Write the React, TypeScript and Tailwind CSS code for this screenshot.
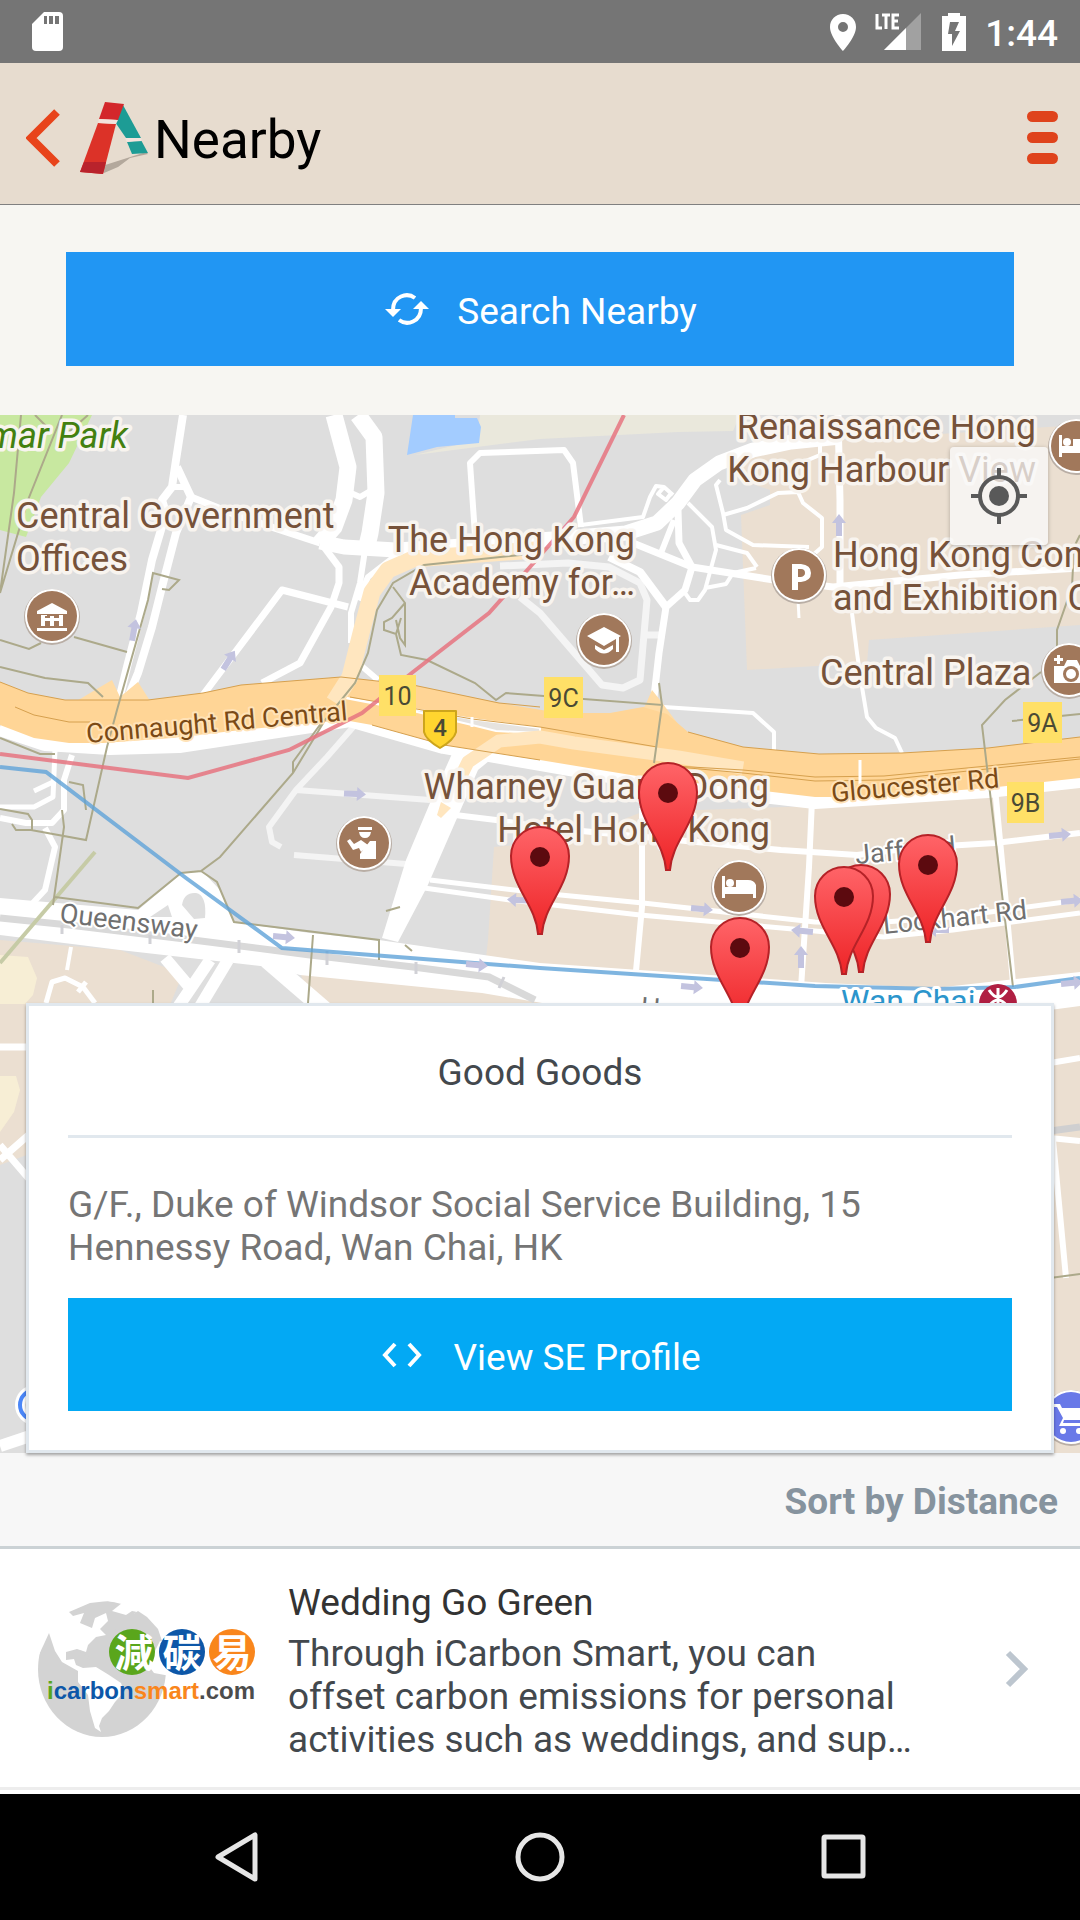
import type { ReactNode } from 'react';

const whiteRoads: [string, number][] = [
  ['M334 415L348 467L344 500L334 527L320 543', 17],
  ['M358 415L374 437L376 493L370 533L366 550', 17],
  ['M320 542L344 547L396 550L448 547L540 540L626 533L657 523L678 503L695 480L719 463L753 450L791 442L840 437', 15],
  ['M183 415L176 460L172 487L162 500L166 513L152 560L141 613L127 667L119 700', 8],
  ['M177 467L191 497L176 533L162 587L152 627L138 673L126 702', 8],
  ['M172 487H186M344 490L360 497L372 490', 6],
  ['M191 497L241 517L320 543', 7],
  ['M324 547L339 567L339 583L331 607L300 663L262 683', 7],
  ['M203 695L282 590L348 607', 7],
  ['M365 550L360 583L351 613V643', 6],
  ['M399 553L368 577L358 600', 6],
  ['M358 663L378 680', 6],
  ['M475 535L470 463L480 453L564 450L573 463L581 527', 6],
  ['M581 525L643 517L650 497L656 486L664 487L673 495M664 487L658 494L666 500L672 492', 4],
  ['M633 543L692 567L774 580L833 587L960 575L1080 568', 7],
  ['M688 503L712 527L716 550L705 590L698 600L690 600L685 593', 4],
  ['M678 510L679 543L692 567L685 590L666 607L659 653L654 697', 7],
  ['M674 520L661 553', 6],
  ['M609 557L640 572L666 607', 8],
  ['M705 588L726 584L733 573L756 568M716 545L747 553L757 567', 4],
  ['M720 480L716 485L723 513L726 530L753 545L809 547', 4],
  ['M723 515L747 508L778 493L798 492L803 503L822 518V547L814 554', 4],
  ['M838 415L840 500V587', 7],
  ['M820 440V455L796 465', 4],
  ['M852 613L857 653L862 687L867 717L876 728L895 738L902 753', 4],
  ['M798 600L799 618', 3],
  ['M664 707L753 713L774 732V750', 4],
  ['M455 815L496 820L540 827L781 850L857 855L912 848L995 843L1080 833', 6],
  ['M430 880L540 893L643 903L815 922L871 923L953 917L1080 900', 5],
  ['M417 887L510 900L640 915L826 932L884 937L953 930L1080 913', 5],
  ['M642 808V907L633 1003', 6],
  ['M812 800L809 867L800 1003', 6],
  ['M995 788L1005 893L1013 983', 6],
  ['M55 750L53 797L34 807H0', 5],
  ['M53 782L34 791', 5],
  ['M72 755L64 780V810L52 823L26 823L0 818', 6],
  ['M45 828L55 847L45 890L31 905', 6],
  ['M46 1003L52 982L65 978L83 987L95 1003M86 982L78 992', 5],
  ['M71 947L67 970', 4],
  ['M0 1047H30M0 1160L40 1125M0 1145L30 1180', 7],
  ['M1050 1063L1080 1058M1050 1138L1080 1141', 6],
  ['M1053 1140L1066 1278', 6],
  ['M0 1446L60 1426', 12],
];

const footways = [
  'M21 415L14 493L0 593M62 415L28 500L0 593M35 415L46 426M88 415L60 440',
  'M0 640L29 649L41 643M74 637L127 652M0 667L45 678L88 683L103 697',
  'M162 589L169 590L179 580L153 573L148 600L117 710L107 747L86 840L31 830L16 830L12 824',
  'M69 782L83 785L86 810M0 809L28 814L32 820V830M0 738L40 754H55',
  'M62 810L64 827L53 905M55 897L138 908L181 873L201 871L220 857L293 773L325 720L355 683L368 653L377 610L393 583L424 565L540 553',
  'M201 871L217 882L234 922L379 940V960M313 935L308 1003M386 911L400 907M405 945L412 951',
  'M293 773V762L322 722M393 587L405 603V645L400 638L396 620M405 603L392 618L384 622V630L396 634L401 618M396 634L401 655L427 660L475 683L496 700L506 693L544 696L662 705L659 683M662 705L654 763',
  'M1080 535L1074 547L1072 587L1057 630V650M1041 672L1005 700L982 725L1013 987M1012 721L1080 714',
  'M1050 1278L1080 1274M153 1003V990',
];

const arrows = [
  [1060, 835, -5], [702, 909, 5], [692, 987, 5], [802, 931, 185], [801, 957, -90], [938, 930, 180],
  [1072, 901, -5], [1072, 983, -5], [355, 794, 3], [284, 937, 5], [477, 965, 5], [518, 900, 183],
  [134, 630, -80], [229, 660, -58], [839, 525, -90],
];

const pins = [[540, 934], [668, 870], [740, 1025], [861, 972], [844, 974], [928, 942]];

const labelClass = 'fill-[#76523a] stroke-[#f8f4ef] stroke-[7px] text-[36px] [paint-order:stroke]';
const roadClass = 'fill-[#7b4a16] stroke-[#ffe3b8] stroke-[4px] text-[27px] [paint-order:stroke]';
const streetClass = 'fill-[#707070] stroke-white stroke-[4px] text-[27px] [paint-order:stroke]';

function Poi({ x, y, color = '#a1785b', children }: { x: number; y: number; color?: string; children?: ReactNode }) {
  return (
    <g transform={`translate(${x} ${y})`}>
      <circle cy="1" r="28" fill="#b9aea5" />
      <circle r="27" fill="#fff" />
      <circle r="25" fill={color} />
      <g fill="#fff">{children}</g>
    </g>
  );
}

function Route({ x, y, w, children }: { x: number; y: number; w: number; children: string }) {
  return (
    <g>
      <rect x={x} y={y} width={w} height="41" fill="#ffe067" />
      <text x={x + w / 2} y={y + 30} textAnchor="middle" className="fill-[#4a4a35] text-[25px]">
        {children}
      </text>
    </g>
  );
}

function Bed() {
  return (
    <g>
      <path d="M-17 -11H-14V3H14V11H17V-2Q15 -7 9 -7H-3V0H-14V11H-17Z" />
      <path d="M-17 3H17V11H14V7H-14V11H-17Z" />
      <circle cx="-9" cy="-4" r="4" />
    </g>
  );
}

function MapView() {
  return (
    <svg
      viewBox="0 415 1080 1038"
      preserveAspectRatio="xMidYMid slice"
      className="absolute inset-0 h-full w-full"
      role="img"
      aria-label="Map of Wan Chai"
    >
      <defs>
        <linearGradient id="pin" x1="0" y1="0" x2="0" y2="1">
          <stop offset="0" stopColor="#ff6468" />
          <stop offset="1" stopColor="#ee2427" />
        </linearGradient>
      </defs>
      <rect y="415" width="1080" height="1038" fill="#dedede" />
      <path d="M0 415H92L69 463L41 497L26 537L0 530Z" fill="#c8e8a0" />
      <path d="M480 415H740L733 431L678 432L540 439L415 455L477 440Z" fill="#eae8dc" />
      <path d="M413 415H455V418H477L481 427L479 443L437 447L407 455Z" fill="#a3ccff" />
      <path d="M745 455L800 443L1080 425V625L869 640L867 663L747 670L741 515L770 505V490L741 480Z" fill="#ebdfd1" />
      <path d="M494 847L570 840L642 812L815 806L1080 782V1453H700L482 993L488 940Z" fill="#ebdfd1" />
      <path d="M0 940L120 950L172 970L179 983L168 1010L100 1150H40L0 1165Z" fill="#ebdfd1" />
      <path d="M300 972L490 990V1030H320Z" fill="#ebdfd1" />
      <path d="M0 955L28 957L37 978L33 995L25 1004H0ZM0 1076H16L20 1090L14 1112L0 1132Z" fill="#f7eed5" />

      {/* Queensway and Hennessy Road */}
      <path
        d="M0 898L138 910L182 873L203 872L220 890L234 922L310 933L379 940L540 963L826 983L935 988L1080 972V1006L900 1030L560 1006L482 993L300 975L269 967L120 950L0 935Z"
        fill="#fff"
      />
      <path d="M182 905Q184 892 196 893Q207 895 205 918L194 919ZM150 917L168 905L172 917Z" fill="#dedede" />
      <g fill="none" stroke="#fff">
        <path d="M210 960L176 1010M228 960L198 1010M165 958L192 990" strokeWidth="12" />
        <path d="M267 960L325 1010" strokeWidth="17" />
      </g>
      <path d="M0 918L69 925L193 940L310 955L413 967L489 977L535 1000" fill="none" stroke="#d9d9d9" strokeWidth="7" />
      <path d="M62 925V934M150 935V944M239 940V953M327 951V965M416 962V974M504 977L499 988" stroke="#d1d1d6" strokeWidth="3" />
      <path d="M1050 1131L1080 1127" stroke="#cfcfd0" strokeWidth="7" />

      <g fill="none" stroke="#f4f4f4" strokeLinejoin="round">
        <path d="M520 597L540 613L602 685L623 688L640 680L647 600L640 583L609 567L568 563L500 566M647 635H659" strokeWidth="7" />
        <path d="M355 725L327 757L296 790L269 827L272 842L281 847M296 790L430 800M294 855L406 864" strokeWidth="6" />
      </g>
      <g fill="none" stroke="#fff" strokeLinejoin="round">
        {whiteRoads.map(([d, w]) => (
          <path key={d} d={d} strokeWidth={w} />
        ))}
        <path d="M0 727L45 742L110 746L179 744L350 718L444 745L540 762L643 780L815 800L988 789L1080 779" strokeWidth="18" />
      </g>
      <path d="M455 747L470 740L500 752L478 770L427 887L398 942L382 938L406 860L430 803Z" fill="#fff" />

      {/* Connaught Road and Gloucester Road */}
      <path d="M75 702L112 680L120 697L138 682L152 704ZM625 722L645 706L652 690L660 700L675 720L690 740Z" fill="#ffdca6" />
      <path
        d="M0 682L28 693L65 700L148 700L203 693L241 685L341 677L413 685L499 703L560 713L610 713L643 707L667 714L688 732L743 747L819 754L902 753L988 748L1080 737V778L988 788L867 797L815 797L643 777L540 760L444 745L372 725L344 720L241 730L172 738L103 743L69 743L34 738L0 725Z"
        fill="#ffd596"
      />
      <path d="M345 698L379 703L472 719L540 728V733L496 731L472 725L413 711Z" fill="#e6e3df" stroke="#fff" strokeWidth="2" />
      <g fill="none" stroke="#ffe6bf" strokeWidth="17" strokeLinejoin="round">
        <path d="M535 550L413 559L388 570L372 592L361 633L350 677L334 702" />
        <path d="M458 782L468 762L499 741L540 737L574 743L678 757L743 768" strokeWidth="13" />
      </g>
      <path d="M441 802L451 808L441 818L437 815Z" fill="#ffe6bf" />
      <g fill="none" stroke="#d6a04e" strokeWidth="1">
        <path d="M0 682L28 693L65 700L148 700L203 693L241 685L341 677L413 685L499 703L540 707M688 732L743 747L819 754L902 753L988 748L1080 737" />
        <path d="M15 707L34 715L69 722H90M350 697L472 719L540 727L657 747M372 725L444 745L540 760M657 765L743 770L815 777L884 776L1080 757" />
        <path d="M657 765L743 773L815 781L884 780L1080 759" />
      </g>
      <path d="M860 760V786M472 717V727" stroke="#fff" strokeWidth="3" />

      <path d="M95 852L0 963" stroke="#c6cba6" strokeWidth="4" />
      <path d={footways.join('')} fill="none" stroke="#aca98a" strokeWidth="2" />
      <path d="M0 754L188 778L289 750L362 713L413 672L489 613L530 567L574 517L624 415" fill="none" stroke="#e67480" strokeWidth="4" opacity=".85" />
      <path d="M0 767L46 772L186 878L282 948L540 968L815 986L936 989L1015 987L1080 978" fill="none" stroke="#5fa3d8" strokeWidth="4" opacity=".8" />
      {arrows.map(([x, y, r]) => (
        <path key={`${x}-${y}`} d="M-11 -3H2V-7L11 0L2 7V3H-11Z" fill="#c3c3df" transform={`translate(${x} ${y}) rotate(${r})`} />
      ))}

      <g className="font-[Roboto,sans-serif]" strokeLinejoin="round">
        <g className={labelClass}>
          <text x="128" y="448" textAnchor="end" className="fill-[#43800f] italic">mar Park</text>
          <text x="16" y="528">Central Government</text>
          <text x="16" y="571">Offices</text>
          <text x="635" y="552" textAnchor="end">The Hong Kong</text>
          <text x="635" y="595" textAnchor="end">Academy for…</text>
          <text x="1036" y="439" textAnchor="end">Renaissance Hong</text>
          <text x="1036" y="482" textAnchor="end">Kong Harbour View</text>
          <text x="833" y="567">Hong Kong Con</text>
          <text x="833" y="610">and Exhibition C</text>
          <text x="820" y="685">Central Plaza</text>
          <text x="769" y="799" textAnchor="end">Wharney Guang Dong</text>
          <text x="770" y="842" textAnchor="end">Hotel Hong Kong</text>
        </g>
        <g className={roadClass}>
          <text transform="translate(87 743) rotate(-5)">Connaught Rd Central</text>
          <text transform="translate(832 802) rotate(-5)">Gloucester Rd</text>
        </g>
        <g className={streetClass}>
          <text transform="translate(59 922) rotate(7)">Queensway</text>
          <text transform="translate(856 864) rotate(-5)">Jaffe Rd</text>
          <text transform="translate(884 934) rotate(-6)">Lockhart Rd</text>
          <text transform="translate(640 1016) rotate(5)">Hennessy Rd</text>
        </g>
        <text x="841" y="1012" className="fill-[#2b95cc] stroke-white stroke-[6px] text-[32px] [paint-order:stroke]">Wan Chai</text>
        <Route x={379} y={675} w={37}>10</Route>
        <Route x={544} y={677} w={39}>9C</Route>
        <Route x={1023} y={702} w={39}>9A</Route>
        <Route x={1007} y={782} w={37}>9B</Route>
        <path d="M424 711H456V732Q454 740 440 748Q426 740 424 732Z" fill="#ffd52f" stroke="#cda51c" strokeWidth="2" />
        <text x="440" y="736" textAnchor="middle" className="fill-[#4a4a35] text-[24px] font-medium">4</text>
      </g>

      <Poi x={52} y={616}>
        <path d="M0 -13L15 -5V-2H-15V-5ZM-11 -1H-5V0H-7V10H-11ZM-2 0H2V10H-2ZM7 0V-1H11V10H7ZM-11 2H11V5H-11ZM-15 12H15V15H-15Z" />
      </Poi>
      <Poi x={604} y={640}>
        <path d="M-17 -4L0 -13L17 -4L0 6ZM-9 5L0 10L9 5V9Q0 18 -9 9ZM12 -2L15 -3V12H12Z" />
      </Poi>
      <Poi x={799} y={575}>
        <path d="M-7 -11H2Q12 -10 12 -2Q12 6 2 7H-1V15H-7ZM-1 -6V2H2Q6 1 6 -2Q6 -6 2 -6Z" fillRule="evenodd" />
      </Poi>
      <Poi x={1076} y={446}><Bed /></Poi>
      <Poi x={739} y={887}><Bed /></Poi>
      <Poi x={1069} y={670}>
        <path d="M-15 -4H-5L-2 -10H8L11 -4H18V13H-15ZM-15 -12H-12V-15H-9V-12H-6V-9H-9V-6H-12V-9H-15Z" />
        <circle cx="2" cy="4" r="8" fill="#a1785b" />
        <circle cx="2" cy="4" r="5" />
      </Poi>
      <Poi x={364} y={843}>
        <path d="M-6 -16H8V-13H-6ZM-5 -11H7Q6 -5 1 -5Q-4 -5 -5 -11ZM-17 -2L-14 -4L-10 1L-3 -3L4 2L-3 9L-5 5L-11 7ZM6 -2H12V16H-4V11Z" />
      </Poi>
      <Poi x={1071} y={1417} color="#6979e8">
        <path d="M-18 -13H-11L-9 -9H14L9 3H-7L-8 6H12V9H-12L-8 1L-14 -10H-18Z" />
        <circle cx="-8" cy="14" r="3" />
        <circle cx="8" cy="14" r="3" />
      </Poi>
      <ellipse cx="998" cy="1004" rx="19" ry="20" fill="#b01f42" />
      <path d="M998 988V1008M989 990Q998 1004 1007 990M989 1006Q998 994 1007 1006" fill="none" stroke="#fff" strokeWidth="3" />
      <circle cx="35" cy="1405" r="15" fill="none" stroke="#fff" strokeWidth="10" />
      <circle cx="35" cy="1405" r="15" fill="none" stroke="#4a86f7" strokeWidth="4" />

      {pins.map(([x, y]) => (
        <g key={x} transform={`translate(${x} ${y})`}>
          <path
            d="M-2 0C-4 -29 -29 -47 -29 -78A29 29 0 0 1 29 -78C29 -47 4 -29 2 0Z"
            fill="url(#pin)"
            stroke="#b52227"
            strokeWidth="2"
          />
          {x !== 861 && <circle cy="-77" r="10" fill="#5c0a0f" />}
        </g>
      ))}
    </svg>
  );
}

function StatusBar() {
  return (
    <div className="flex h-[63px] items-center bg-[#757575] pr-[22px] pl-8 text-white">
      <svg viewBox="0 0 31 39" className="h-[39px] w-[31px]" aria-hidden="true">
        <path d="M12 0H27Q31 0 31 4V35Q31 39 27 39H4Q0 39 0 35V12Z" fill="#fff" />
        <path d="M12 4H15V12H12ZM17 4H21V12H17ZM23 4H27V12H23Z" fill="#757575" />
      </svg>
      <div className="ml-auto flex items-center">
        <svg viewBox="0 0 26 38" className="h-[38px] w-[26px]" aria-hidden="true">
          <path
            d="M13 1C5.600 1 0 6.600 0 14C0 24 13 38 13 38S26 24 26 14C26 6.600 20.400 1 13 1ZM13 9A5 5 0 1 1 13 19A5 5 0 0 1 13 9Z"
            fill="#fff"
          />
        </svg>
        <svg viewBox="0 0 46 38" className="ml-[19px] h-[38px] w-[46px]" aria-hidden="true">
          <path d="M46 0V37H9Z" fill="#a1a1a1" />
          <path d="M31 15V37H9Z" fill="#fff" />
          <path d="M2 1V15H7M7 2H15M11 2V16M24 2H18V15H24M18 8H23" fill="none" stroke="#fff" strokeWidth="3" />
        </svg>
        <svg viewBox="0 0 24 38" className="ml-[21px] h-[38px] w-6" aria-hidden="true">
          <path d="M6 0H18V3H24V38H0V3H6ZM8 9L6 21H10V33L18 18H13L17 9Z" fill="#fff" fillRule="evenodd" />
        </svg>
        <span className="ml-[19px] pt-1 text-[37px] leading-10 font-medium">1:44</span>
      </div>
    </div>
  );
}

function Header() {
  return (
    <header className="flex h-[142px] items-center border-b border-[#808080] bg-[#e7dccf] pt-1 pr-[22px] pl-[26px]">
      <button type="button" aria-label="Back" className="flex items-center gap-5 pt-1">
        <svg viewBox="0 0 34 58" className="h-[58px] w-[34px]" aria-hidden="true">
          <path d="M31 3L5 29L31 55" fill="none" stroke="#e8441b" strokeWidth="8" />
        </svg>
        <svg viewBox="0 0 68 72" className="h-[72px] w-[68px]" aria-hidden="true">
          <path d="M22 64L66 50L68 52L50 56L38 65L24 71Z" fill="#b3a89c" />
          <path d="M43 3L61 36L46 36L35 20Z" fill="#1d9c95" />
          <path d="M47 40L61 38L68 51L52 52Z" fill="#1d9c95" />
          <path d="M25 0L44 2L38 18L19 17Z" fill="#d3272b" />
          <path d="M18 21L36 22L23 72L0 70Z" fill="#dc3228" />
          <path d="M4 60L26 60L23 72L0 70Z" fill="#b9232c" />
          <path d="M19 17L38 18L36 22L18 21ZM45 36L61 36L62 39L47 40Z" fill="#f3e3dc" />
        </svg>
      </button>
      <h1 className="pt-2 pl-1.5 text-[53px] leading-[60px] text-black">Nearby</h1>
      <button type="button" aria-label="Menu" className="ml-auto flex flex-col gap-2.5 pt-1">
        <span className="h-[11px] w-[31px] rounded-full bg-[#df431c]" />
        <span className="h-[11px] w-[31px] rounded-full bg-[#df431c]" />
        <span className="h-[11px] w-[31px] rounded-full bg-[#df431c]" />
      </button>
    </header>
  );
}

function PlaceCard() {
  return (
    <article className="relative border-[3px] border-[#e1e8ee] bg-white px-[39px] pb-[39px] shadow-[0_2px_3px_rgba(0,0,0,0.35)]">
      <h2 className="border-b-[3px] border-[#e1e8ee] pt-[45px] pb-[41px] text-center text-[37px] leading-[43px] text-[#43484d]">
        Good Goods
      </h2>
      <p className="mt-[45px] text-[37px] leading-[43px] text-[#757575]">
        G/F., Duke of Windsor Social Service Building, 15 Hennessy Road, Wan Chai, HK
      </p>
      <button type="button" className="mt-[29px] flex h-[113px] w-full items-center justify-center gap-[31px] bg-[#03a9f4] pl-[3px] text-[37px] text-white">
        <svg viewBox="0 0 40 26" className="h-[26px] w-10" aria-hidden="true">
          <path d="M13 2L3 13L13 24M27 2L37 13L27 24" fill="none" stroke="#fff" strokeWidth="4" />
        </svg>
        <span className="pt-1.5">View SE Profile</span>
      </button>
    </article>
  );
}

function CarbonLogo() {
  return (
    <svg viewBox="36 1596 222 144" className="h-[144px] w-[222px] shrink-0" role="img" aria-label="icarbonsmart.com">
      <ellipse cx="102" cy="1668" rx="64" ry="68" fill="#d3d3d3" />
      <path
        d="M36 1596H95L108 1600L90 1602L69 1611L73 1615L84 1612L80 1622L92 1627L95 1617L106 1612L108 1620L100 1628L106 1634L96 1636L88 1644L86 1651L77 1648L66 1651L66 1659L74 1658L76 1664L83 1667L96 1666L109 1674L121 1682L124 1691L115 1701L109 1710L102 1717L99 1725L101 1731L95 1727L90 1710L88 1694L78 1681L78 1670L62 1661L55 1650L49 1632L44 1643L36 1660Z"
        fill="#fff"
      />
      <path d="M80 1650L88 1656L92 1661" fill="none" stroke="#d3d3d3" strokeWidth="2" />
      <path d="M108 1600L122 1602L112 1610L126 1614L132 1610L160 1615V1596H104ZM134 1613L142 1607L158 1623H146L134 1632L128 1630Z" fill="#fff" />
      <path d="M113 1632L120 1622L138 1610L147 1616L158 1628L162 1640H112Z" fill="#d3d3d3" />
      <path d="M160 1640L172 1650L170 1675L154 1672L148 1664Z" fill="#fff" />
      <circle cx="132" cy="1651" r="23" fill="#5aa61c" />
      <circle cx="182" cy="1651" r="23" fill="#0d57a8" />
      <circle cx="232" cy="1651" r="23" fill="#f9861c" />
      <g textAnchor="middle" className="fill-white font-['Noto_Sans_CJK_TC',sans-serif] text-[39px] font-bold">
        <text x="134" y="1666">減</text>
        <text x="182" y="1666">碳</text>
        <text x="232" y="1666">易</text>
      </g>
      <text x="47" y="1698" className="fill-[#0d57a8] font-['Liberation_Sans',sans-serif] text-[24px] font-bold">
        <tspan className="fill-[#5aa61c]">i</tspan>carbon<tspan className="fill-[#f9861c]">smart</tspan>
        <tspan className="fill-[#4c4c4c]">.com</tspan>
      </text>
    </svg>
  );
}

export default function App() {
  return (
    <div className="flex min-h-screen flex-col bg-white font-[Roboto,sans-serif]">
      <StatusBar />
      <Header />
      <main className="flex-1">
        <div className="bg-[#f7f6f2] px-[66px] pt-[47px] pb-[49px]">
          <button type="button" className="flex h-[114px] w-full items-center justify-center gap-7 bg-[#2196f3] pl-0.5 text-[37px] text-white">
            <svg viewBox="0 0 44 32" className="h-8 w-11" aria-hidden="true">
              <path d="M8 17C8 3 22 -1 30 5M36 15C36 29 22 33 14 27" fill="none" stroke="#fff" strokeWidth="4" />
              <path d="M0 16H16L8 24ZM28 16H44L36 8Z" fill="#fff" />
            </svg>
            <span className="pt-1.5">Search Nearby</span>
          </button>
        </div>

        <section className="relative px-[26px] pt-[588px]">
          <MapView />
          <button
            type="button"
            aria-label="My location"
            className="absolute top-8 right-8 flex size-[98px] items-center justify-center rounded-sm bg-[#fafafa]/75 shadow-[0_1px_4px_rgba(0,0,0,0.25)]"
          >
            <svg viewBox="0 0 56 56" className="size-14" aria-hidden="true">
              <circle cx="28" cy="28" r="19" fill="none" stroke="#595959" strokeWidth="4" />
              <circle cx="28" cy="28" r="10" fill="#595959" />
              <path d="M28 0V8M28 48V56M0 28H8M48 28H56" stroke="#595959" strokeWidth="4" />
            </svg>
          </button>
          <PlaceCard />
        </section>

        <div className="flex h-24 justify-end border-b-[3px] border-[#cbd2d5] bg-[#f7f7f7] pr-[22px]">
          <button type="button" className="pt-1 text-[37px] font-bold text-[#86939e]">Sort by Distance</button>
        </div>
        <ul>
          <li className="border-b-[3px] border-[#ededed]">
            <a href="#wedding-go-green" className="flex items-center pt-7 pr-[51px] pb-[26px] pl-9">
              <CarbonLogo />
              <div className="ml-[30px] max-w-[632px] pt-1 text-[37px] leading-[43px]">
                <h3 className="text-[#333]">Wedding Go Green</h3>
                <p className="mt-2 text-[#43484d]">
                  Through iCarbon Smart, you can offset carbon emissions for personal activities such as weddings, and sup…
                </p>
              </div>
              <svg viewBox="0 0 24 38" className="ml-auto h-[38px] w-6" aria-hidden="true">
                <path d="M3 3L19 19L3 35" fill="none" stroke="#bdc6cf" strokeWidth="6" />
              </svg>
            </a>
          </li>
        </ul>
      </main>

      <nav className="flex h-[126px] items-center justify-between bg-black px-[210px]">
        <button type="button" aria-label="Back">
          <svg viewBox="0 0 52 52" className="size-[52px]" aria-hidden="true">
            <path d="M45 4V48L8 26Z" fill="none" stroke="#e6e6e6" strokeWidth="5" strokeLinejoin="round" />
          </svg>
        </button>
        <button type="button" aria-label="Home">
          <svg viewBox="0 0 52 52" className="size-[52px]" aria-hidden="true">
            <circle cx="26" cy="26" r="22" fill="none" stroke="#e6e6e6" strokeWidth="5" />
          </svg>
        </button>
        <button type="button" aria-label="Recent apps">
          <svg viewBox="0 0 52 52" className="size-[52px]" aria-hidden="true">
            <rect x="6" y="6" width="39" height="39" rx="1" fill="none" stroke="#e6e6e6" strokeWidth="5" />
          </svg>
        </button>
      </nav>
    </div>
  );
}
